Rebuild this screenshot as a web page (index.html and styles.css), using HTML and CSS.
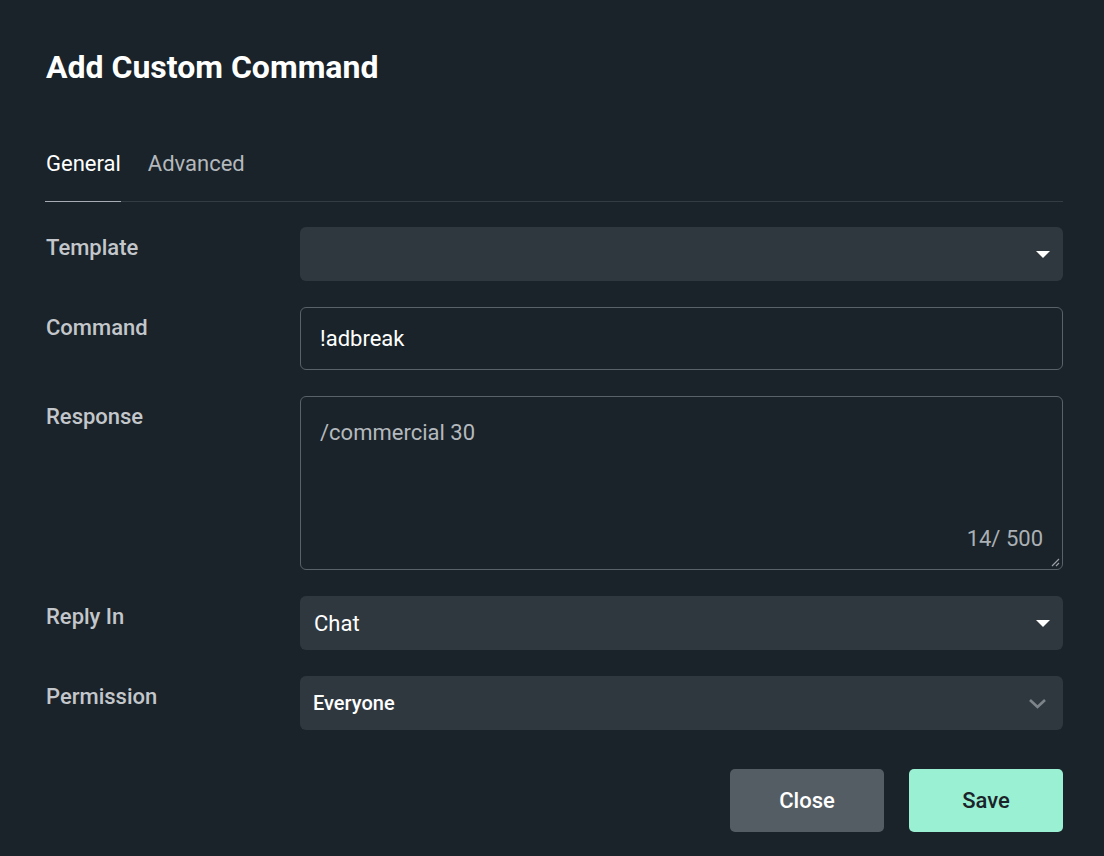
FILE: index.html
```html
<!DOCTYPE html>
<html lang="en">
<head>
    <meta charset="UTF-8">
    <meta name="viewport" content="width=device-width, initial-scale=1.0">
    <title>Add Custom Command</title>
    <link rel="stylesheet" href="styles.css">
</head>
<body>
    <div class="dialog">
        <h1 class="title">Add Custom Command</h1>

        <div class="tabs">
            <div class="tab active">General</div>
            <div class="tab">Advanced</div>
        </div>

        <div class="form">
            <label class="label">Template</label>
            <div class="select">
                <span class="value"></span>
                <span class="caret"></span>
            </div>

            <label class="label">Command</label>
            <div class="input">!adbreak</div>

            <label class="label">Response</label>
            <div class="textarea">
                <div class="text">/commercial 30</div>
                <div class="counter">14/ 500</div>
                <svg class="grip" width="10" height="10" viewBox="0 0 10 10">
                    <path d="M9 2 L2 9 M9 6 L6 9" stroke="#9aa0a6" stroke-width="1.2" fill="none"/>
                </svg>
            </div>

            <label class="label">Reply In</label>
            <div class="select">
                <span class="value">Chat</span>
                <span class="caret"></span>
            </div>

            <label class="label">Permission</label>
            <div class="select small">
                <span class="value">Everyone</span>
                <svg class="chevron" width="19" height="11" viewBox="0 0 19 11">
                    <path d="M2 2 L9.5 9 L17 2" stroke="#7d858b" stroke-width="2.6" fill="none"/>
                </svg>
            </div>
        </div>

        <div class="actions">
            <button class="btn close">Close</button>
            <button class="btn save">Save</button>
        </div>
    </div>
</body>
</html>
```

FILE: styles.css
```css
body {
    margin: 0;
    background-color: #1a2329;
    font-family: Roboto, "Liberation Sans", sans-serif;
    color: #ffffff;
}
.dialog {
    padding: 47px 41px 0 45px;
}
.title {
    margin: 0 0 0 1px;
    font-size: 32px;
    font-weight: 700;
    line-height: 40px;
}
.tabs {
    display: flex;
    gap: 26px;
    margin-top: 64px;
    border-bottom: 1px solid #323c43;
}
.tab {
    padding: 0 0 24px 1px;
    font-size: 22px;
    line-height: 26px;
    color: #b3b8bd;
}
.tab.active {
    color: #ffffff;
    box-shadow: 0 1px 0 0 #a7adb2;
}
.form {
    display: grid;
    grid-template-columns: 255px 1fr;
    row-gap: 26px;
    margin-top: 25px;
}
.label {
    padding: 8px 0 0 1px;
    font-size: 22px;
    line-height: 26px;
    font-weight: 500;
    color: #c3c7cb;
}
.select {
    display: flex;
    align-items: center;
    justify-content: space-between;
    height: 54px;
    padding: 0 13px 0 14px;
    border-radius: 6px;
    background-color: #30383f;
    font-size: 22px;
}
.select.small .value {
    font-size: 20px;
    font-weight: 500;
    margin-left: -1px;
}
.caret {
    width: 0;
    height: 0;
    border-left: 7px solid transparent;
    border-right: 7px solid transparent;
    border-top: 7px solid #ffffff;
}
.chevron {
    margin-right: 3px;
}
.input {
    height: 61px;
    padding: 0 19px;
    border: 1px solid #59626a;
    border-radius: 6px;
    font-size: 22px;
    line-height: 62px;
}
.textarea {
    position: relative;
    height: 172px;
    border: 1px solid #59626a;
    border-radius: 6px;
}
.textarea .text {
    padding: 23px 19px 0;
    font-size: 22px;
    line-height: 26px;
    color: #b4b9be;
}
.textarea .counter {
    position: absolute;
    right: 19px;
    bottom: 17px;
    font-size: 22px;
    line-height: 26px;
    color: #abb0b5;
}
.grip {
    position: absolute;
    right: 2px;
    bottom: 2px;
}
.actions {
    display: flex;
    justify-content: flex-end;
    gap: 25px;
    margin-top: 39px;
}
.btn {
    width: 154px;
    height: 63px;
    border: none;
    border-radius: 5px;
    font-family: Roboto, "Liberation Sans", sans-serif;
    font-size: 22px;
    font-weight: 500;
    cursor: pointer;
}
.btn.close {
    background-color: #545d64;
    color: #ffffff;
}
.btn.save {
    background-color: #9af0d2;
    color: #1a2329;
}
```
